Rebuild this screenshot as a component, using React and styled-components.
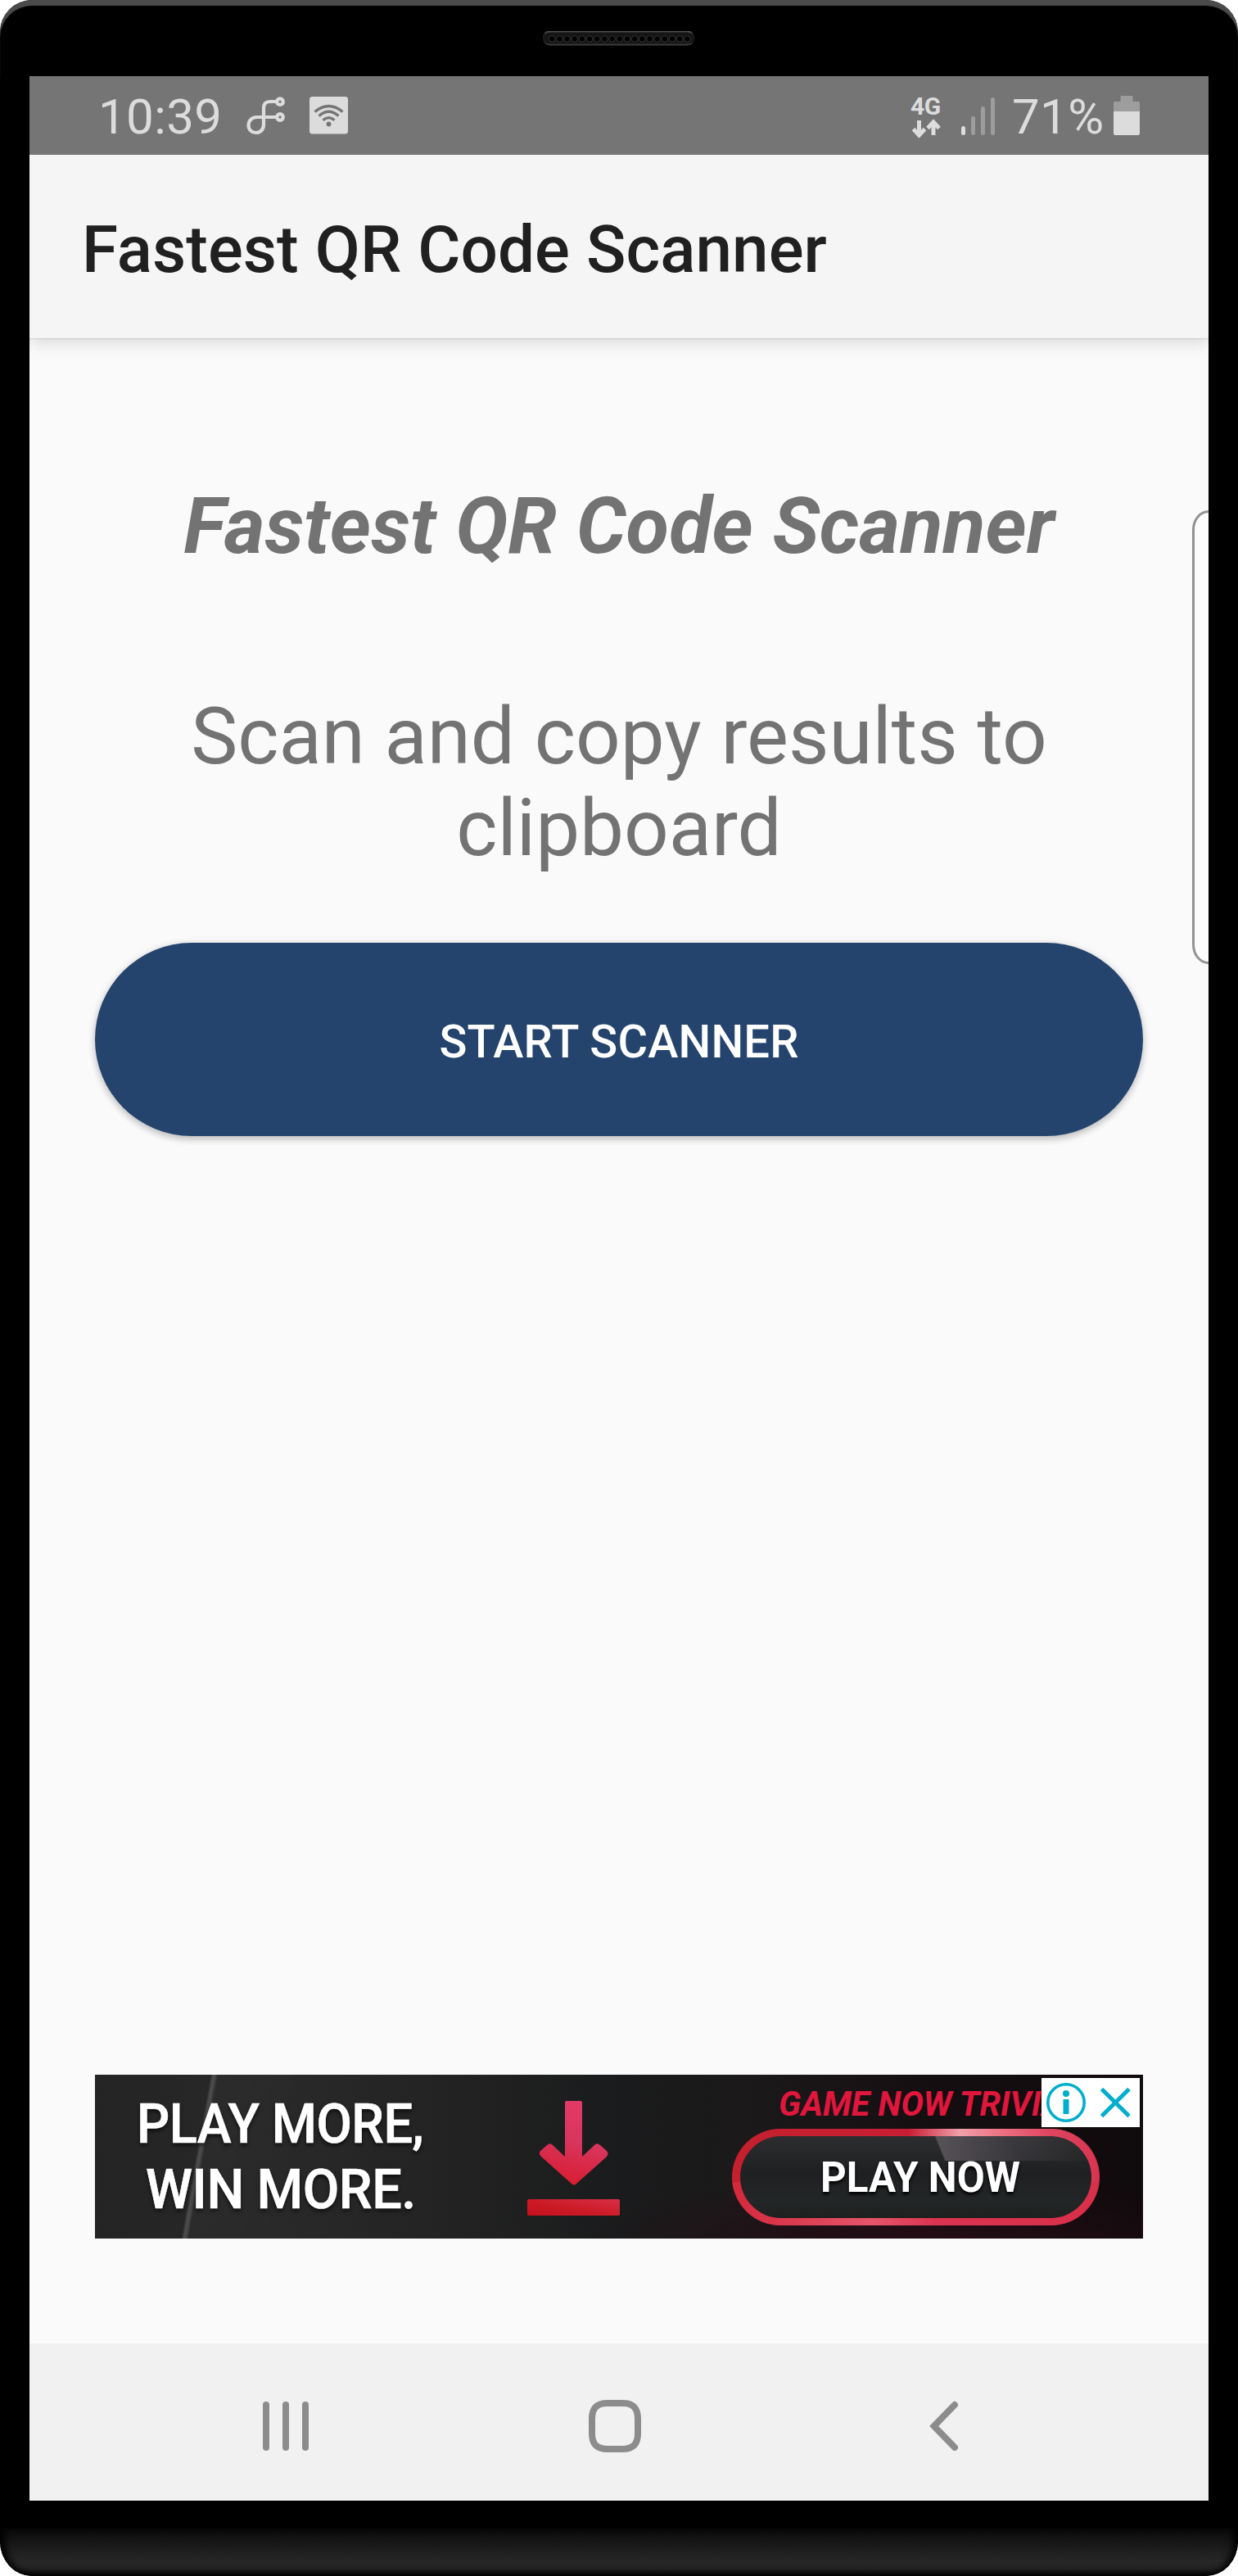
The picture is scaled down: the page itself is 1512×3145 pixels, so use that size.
import React from "react";
import styled, { createGlobalStyle } from "styled-components";

const GlobalStyle = createGlobalStyle`
  *, *::before, *::after { box-sizing: border-box; }
  body { margin: 0; background: #fff; font-family: Roboto, "Liberation Sans", sans-serif; }
  h1, h2, p { margin: 0; font-weight: 400; }
  svg { display: block; flex: none; }
`;

const Phone = styled.div`
  width: 1512px;
  height: 3145px;
  display: flex;
  flex-direction: column;
  align-items: center;
  background: #000;
  border-radius: 39px 39px 39px 39px / 39px 39px 42px 42px;
  overflow: hidden;
`;

const TopBezel = styled.div`
  width: 100%;
  height: 93px;
  flex: none;
  display: flex;
  justify-content: center;
  padding-top: 38px;
  border-radius: 39px 39px 0 0;
  box-shadow: inset 0 7px 1px #4b4b4b;
`;

const Screen = styled.main`
  width: 1440px;
  height: 2960px;
  flex: none;
  display: flex;
  flex-direction: column;
  background: #fafafa;
  position: relative;
`;

const BottomBezel = styled.div`
  width: 100%;
  height: 58px;
  margin-top: 34px;
  flex: none;
  border-radius: 0 0 39px 39px / 0 0 42px 42px;
  background: linear-gradient(#0a0a0a 0%, #121212 20%, #222 55%, #272727 72%, #222 84%, #050505 100%);
  box-shadow: inset 9px 0 10px -3px #000, inset -9px 0 10px -3px #000;
`;

const StatusBar = styled.header`
  height: 96px;
  flex: none;
  display: flex;
  align-items: flex-start;
  justify-content: space-between;
  padding: 0 84px 0 84px;
  background: #757575;
  color: #dcdcdc;
`;

const StatusGroup = styled.div`
  display: flex;
  align-items: flex-start;
`;

const StatusText = styled.span`
  display: block;
  width: ${(p) => p.$width}px;
  padding-top: 15px;
  font-size: 60px;
  line-height: 70px;
  letter-spacing: 0.4px;
  white-space: nowrap;
`;

const Network = styled.div`
  width: 48px;
  padding-top: 25px;
  display: flex;
  flex-direction: column;
  align-items: flex-start;
`;

const NetworkLabel = styled.span`
  font-size: 30px;
  line-height: 24px;
  height: 27px;
  font-weight: 700;
  letter-spacing: -0.5px;
`;

const AppBar = styled.div`
  height: 224px;
  flex: none;
  padding: 69px 64px 0;
  background: #f5f5f5;
  box-shadow: 0 1px 1px rgba(0, 0, 0, 0.1), 0 6px 18px rgba(0, 0, 0, 0.13);
  clip-path: inset(0 0 -40px 0);
`;

const AppTitle = styled.h1`
  font-size: 80px;
  line-height: 94px;
  font-weight: 500;
  letter-spacing: 0.06px;
  color: #202020;
`;

const Content = styled.section`
  flex: 1;
  display: flex;
  flex-direction: column;
  align-items: center;
  padding: 173px 80px 128px;
`;

const Heading = styled.h2`
  font-size: 96px;
  line-height: 112px;
  font-weight: 700;
  font-style: italic;
  color: #737373;
  white-space: nowrap;
`;

const Description = styled.p`
  margin-top: 145px;
  width: 1180px;
  font-size: 96px;
  line-height: 112px;
  text-align: center;
  color: #737373;
`;

const StartButton = styled.button`
  margin-top: 84px;
  width: 1280px;
  height: 236px;
  flex: none;
  border: 0;
  padding: 6px 0 0;
  border-radius: 118px;
  background: #24446e;
  color: #fff;
  font: 500 56px/66px Roboto, "Liberation Sans", sans-serif;
  letter-spacing: 0.2px;
  box-shadow: 0 4px 8px rgba(0, 0, 0, 0.2), 0 1px 12px rgba(0, 0, 0, 0.09);
`;

const Ad = styled.aside`
  margin-top: auto;
  width: 1280px;
  height: 200px;
  flex: none;
  display: flex;
  position: relative;
  overflow: hidden;
  color: #fff;
  background:
    linear-gradient(100.2deg, transparent 139px, rgba(255, 255, 255, 0.17) 142px, rgba(255, 255, 255, 0.17) 144px, rgba(255, 255, 255, 0.02) 148px, transparent 250px),
    radial-gradient(ellipse 420px 90px at 1010px 210px, #240c14, transparent),
    linear-gradient(90deg, #242424 0, #292929 230px, #232323 420px, #1a1b1c 640px, #1b191a 800px, #160f12 1000px, #0f0a0c 1280px);
`;

const Slogan = styled.div`
  width: 452px;
  padding-top: 20px;
  flex: none;
  display: flex;
  flex-direction: column;
`;

const SloganLine = styled.span`
  margin-left: ${(p) => p.$left}px;
  height: 80px;
  font: 500 67px/80px Roboto, "Liberation Sans", sans-serif;
  letter-spacing: -0.5px;
  white-space: nowrap;
  transform: scaleX(${(p) => p.$stretch});
  transform-origin: 0 0;
  text-shadow: 0 3px 5px rgba(0, 0, 0, 0.7);
  -webkit-text-stroke: 0.7px #fff;
`;

const DownloadMark = styled.div`
  width: 326px;
  flex: none;
  padding: 31px 0 0 75px;
`;

const Promo = styled.div`
  flex: 1;
  display: flex;
  flex-direction: column;
`;

const PromoTitle = styled.span`
  margin: 10px 0 0 57px;
  height: 56px;
  font: italic 700 43px/50px Roboto, "Liberation Sans", sans-serif;
  color: #e0163c;
  white-space: nowrap;
  transform: scaleX(0.955);
  transform-origin: 0 0;
`;

const PlayButton = styled.div`
  width: 449px;
  height: 118px;
  padding: 9px 10px;
  border-radius: 59px;
  background:
    linear-gradient(90deg, #d4283c, #e5556a 38%, #dc3450 55%, #d8304a) 0 100% / 100% 45% no-repeat,
    linear-gradient(90deg, #c4202e, #c81e34 48%, #f0a0aa 62%, #ee7686 72%, #e04660 86%, #d83450);
`;

const PlayFace = styled.div`
  height: 100px;
  border-radius: 50px;
  display: flex;
  justify-content: center;
  padding: 21px 0 0 11px;
  background:
    linear-gradient(68deg, transparent 231px, rgba(130, 120, 130, 0.5) 233px, rgba(90, 84, 92, 0.32) 320px, transparent 400px) 0 0 / 100% 30px no-repeat,
    linear-gradient(#2c2d2f, #1f2022 45%, #232626 80%, #1e2020);
`;

const PlayLabel = styled.span`
  font: 700 51px/60px Roboto, "Liberation Sans", sans-serif;
  white-space: nowrap;
  transform: scaleX(0.968);
  text-shadow: 0 3px 4px #000;
`;

const AdChoices = styled.div`
  position: absolute;
  top: 4px;
  right: 4px;
  width: 120px;
  height: 60px;
  display: flex;
  background: #fff;
`;

const EdgeHandle = styled.div`
  position: absolute;
  top: 530px;
  right: 0;
  width: 20px;
  height: 554px;
  border: 3px solid #939393;
  border-right: 0;
  border-radius: 22px 0 0 22px / 26px 0 0 26px;
  background: #fcfcfc;
`;

const NavBar = styled.nav`
  height: 192px;
  flex: none;
  display: flex;
  padding: 67px 0 0 20px;
  background: #f1f1f1;
`;

const NavItem = styled.div`
  width: ${(p) => p.$width}px;
  display: flex;
  justify-content: center;
`;

const Speaker = () => (
  <svg width="186" height="18" viewBox="0 0 186 18">
    <defs>
      <linearGradient id="rim" x1="0" y1="0" x2="0" y2="1">
        <stop offset="0" stopColor="#555" />
        <stop offset="0.25" stopColor="#1b1b1b" />
        <stop offset="0.75" stopColor="#151515" />
        <stop offset="1" stopColor="#3c3c3c" />
      </linearGradient>
    </defs>
    <rect x="0.5" y="0.5" width="184" height="16" rx="8" fill="#141414" stroke="url(#rim)" strokeWidth="2" />
    {Array.from({ length: 19 }, (_, i) => (
      <circle key={i} cx={11.2 + i * 9.18} cy="9.4" r="3.8" fill="#000" stroke="#363636" strokeWidth="1" />
    ))}
  </svg>
);

const RouteIcon = () => (
  <svg width="48" height="48" viewBox="0 0 48 48" fill="none" stroke="#dcdcdc" strokeWidth="4.2">
    <path d="M37 6H29Q21 6 21 14V34C21 40 17 44 12 44C6 44 2.500 40 2.500 35C2.500 29 7 25 13 25H37" />
    <circle cx="41" cy="6.200" r="3.800" />
    <circle cx="41" cy="25" r="3.800" />
  </svg>
);

const WifiTile = () => (
  <svg width="47" height="46" viewBox="0 0 47 46" fill="none" stroke="#757575" strokeWidth="3.300">
    <rect width="47" height="45.500" rx="3.500" fill="#dcdcdc" stroke="none" />
    <path d="M6.500 18.500Q23.500 4.500 40.500 18.500M11.500 23.500Q23.500 13 35.500 23.500M16.500 28.800Q23.500 22.500 30.500 28.800" />
    <circle cx="23.500" cy="33.500" r="2.900" fill="#757575" stroke="none" />
  </svg>
);

const DataArrows = () => (
  <svg width="38" height="24" viewBox="0 0 38 24" fill="none" stroke="#dcdcdc" strokeWidth="5">
    <path d="M10.500 2V19M3.500 12.500L10.500 20L17.500 12.500M28 20V5M21 11.500L28 4L35 11.500" />
  </svg>
);

const SignalIcon = () => (
  <svg width="42" height="46" viewBox="0 0 42 46">
    <rect x="0" y="35" width="5" height="11" rx="2.500" fill="#dcdcdc" />
    <rect x="12" y="23" width="5" height="23" rx="2.500" fill="#9d9d9d" />
    <rect x="24" y="11" width="5" height="35" rx="2.500" fill="#9d9d9d" />
    <rect x="36" y="0" width="5" height="46" rx="2.500" fill="#9d9d9d" />
  </svg>
);

const BatteryIcon = () => (
  <svg width="32" height="48" viewBox="0 0 32 48">
    <path d="M8.500 1Q8.500 0 9.500 0H22.500Q23.500 0 23.500 1V7H30Q32 7 32 9V20H0V9Q0 7 2 7H8.500Z" fill="#9d9d9d" />
    <path d="M0 19H32V46Q32 48 30 48H2Q0 48 0 46Z" fill="#dcdcdc" />
  </svg>
);

const DownloadIcon = () => (
  <svg width="116" height="144" viewBox="0 0 116 144">
    <defs>
      <linearGradient id="arrow" x1="0.6" y1="0" x2="0.4" y2="1">
        <stop offset="0" stopColor="#e23a68" />
        <stop offset="0.5" stopColor="#d8345c" />
        <stop offset="1" stopColor="#d81c30" />
      </linearGradient>
      <linearGradient id="base" x1="0" y1="1" x2="1" y2="0">
        <stop offset="0" stopColor="#c4101c" />
        <stop offset="0.5" stopColor="#cc1c28" />
        <stop offset="1" stopColor="#d83048" />
      </linearGradient>
    </defs>
    <path d="M49 1H66Q68 1 68 3V69L84 54Q87 52 90 55L98 62Q101 65 98 69L61 102Q58 105 55 102L18 69Q14 65 17 62L25 55Q28 52 31 54L47 69V3Q47 1 49 1Z" fill="url(#arrow)" />
    <rect x="1" y="121" width="113" height="20" rx="2" fill="url(#base)" />
  </svg>
);

const AdChoicesIcons = () => (
  <svg width="120" height="60" viewBox="0 0 120 60" fill="none" stroke="#00aecd">
    <circle cx="30" cy="30" r="22.200" strokeWidth="3.600" />
    <circle cx="30" cy="19" r="4" fill="#00aecd" stroke="none" />
    <path d="M30 26V44" strokeWidth="7" />
    <path d="M73.500 13.500L107 46.500M107 13.500L73.500 46.500" strokeWidth="5" />
  </svg>
);

const RecentsIcon = () => (
  <svg width="56" height="64" viewBox="0 0 56 64" fill="#8c8c8c">
    <rect x="0" y="4" width="8" height="60" rx="4" />
    <rect x="24" y="4" width="8" height="60" rx="4" />
    <rect x="48" y="4" width="8" height="60" rx="4" />
  </svg>
);

const HomeIcon = () => (
  <svg width="64" height="66" viewBox="0 0 64 66" fill="none" stroke="#8c8c8c" strokeWidth="8">
    <path d="M23 6H41C54 6 60 12 60 25V43C60 56 54 62 41 62H23C10 62 4 56 4 43V25C4 12 10 6 23 6Z" />
  </svg>
);

const BackIcon = () => (
  <svg width="36" height="64" viewBox="0 0 36 64" fill="none" stroke="#8c8c8c" strokeWidth="8" strokeLinecap="round">
    <path d="M31 8L5.700 34L31 60" />
  </svg>
);

const Slot = styled.div`
  padding-top: ${(p) => p.$top}px;
  margin-left: ${(p) => p.$left}px;
`;

export default function App() {
  return (
    <>
      <GlobalStyle />
      <Phone>
        <TopBezel>
          <Speaker />
        </TopBezel>
        <Screen>
          <StatusBar>
            <StatusGroup>
              <StatusText $width={150}>10:39</StatusText>
              <Slot $top={25} $left={31}><RouteIcon /></Slot>
              <Slot $top={25} $left={29}><WifiTile /></Slot>
            </StatusGroup>
            <StatusGroup>
              <Network>
                <NetworkLabel>4G</NetworkLabel>
                <DataArrows />
              </Network>
              <Slot $top={26} $left={14}><SignalIcon /></Slot>
              <Slot $top={0} $left={20}><StatusText $width={114}>71%</StatusText></Slot>
              <Slot $top={24} $left={10}><BatteryIcon /></Slot>
            </StatusGroup>
          </StatusBar>
          <AppBar>
            <AppTitle>Fastest QR Code Scanner</AppTitle>
          </AppBar>
          <Content>
            <Heading>Fastest QR Code Scanner</Heading>
            <Description>Scan and copy results to clipboard</Description>
            <StartButton>START SCANNER</StartButton>
            <Ad>
              <Slogan>
                <SloganLine $left={51} $stretch={0.94}>PLAY MORE,</SloganLine>
                <SloganLine $left={62} $stretch={0.967}>WIN MORE.</SloganLine>
              </Slogan>
              <DownloadMark>
                <DownloadIcon />
              </DownloadMark>
              <Promo>
                <PromoTitle>GAME NOW TRIVIA</PromoTitle>
                <PlayButton>
                  <PlayFace>
                    <PlayLabel>PLAY NOW</PlayLabel>
                  </PlayFace>
                </PlayButton>
              </Promo>
              <AdChoices>
                <AdChoicesIcons />
              </AdChoices>
            </Ad>
          </Content>
          <NavBar>
            <NavItem $width={586}><RecentsIcon /></NavItem>
            <NavItem $width={218}><HomeIcon /></NavItem>
            <NavItem $width={586}><BackIcon /></NavItem>
          </NavBar>
          <EdgeHandle />
        </Screen>
        <BottomBezel />
      </Phone>
    </>
  );
}
